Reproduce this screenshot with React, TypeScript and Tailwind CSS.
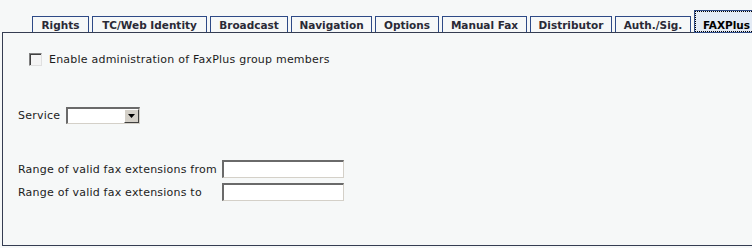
const tabs = [
  { label: 'Rights', w: 'w-[57px]' },
  { label: 'TC/Web Identity', w: 'w-[115px]' },
  { label: 'Broadcast', w: 'w-[78px]' },
  { label: 'Navigation', w: 'w-[81px]' },
  { label: 'Options', w: 'w-[64px]' },
  { label: 'Manual Fax', w: 'w-[85px]' },
  { label: 'Distributor', w: 'w-[82px]' },
  { label: 'Auth./Sig.', w: 'w-[76px]' },
]

function Field({ className }: { className?: string }) {
  return (
    <div className={`border-t-2 border-l-2 border-t-[#6a6a6a] border-l-[#6a6a6a] border-b border-r border-b-[#d4d0c8] border-r-[#d4d0c8] bg-white ${className ?? ''}`} />
  )
}

export default function App() {
  return (
    <div className="w-[752px] h-[248px] overflow-hidden bg-[#f6f8f8] text-[#1c1c1c] font-['DejaVu_Sans',sans-serif] text-[11px] leading-none">

      {/* Tabs */}
      <div className="flex items-end h-[32px] pl-[32px] gap-[3px] text-[10.5px]">
        {tabs.map((t) => (
          <div
            key={t.label}
            className={`${t.w} h-[16px] pt-[2px] shrink-0 flex items-center justify-center border border-b-0 border-[#2e4a86] font-bold text-[#2a2a36]`}
          >
            {t.label}
          </div>
        ))}
        <div className="relative w-[65px] h-[23px] -mb-[1px] z-10 shrink-0 border border-[#2e4a86] bg-[#e4ebf5]">
          <div className="absolute inset-0 pt-[7px] border border-dotted border-black flex items-center justify-center font-bold text-black">
            FAXPlus
          </div>
        </div>
      </div>

      {/* Panel */}
      <div className="ml-[2px] w-[800px] h-[214px] border border-[#353d52] tracking-[0.22px]">
        <div className="flex items-center pl-[26px] pt-[20px] gap-[7px]">
          <div className="w-[13px] h-[13px] border border-t-[#808080] border-l-[#808080] border-b-[#e0e0e0] border-r-[#e0e0e0] bg-[#f4f4f4] shadow-[inset_1px_1px_0_#404040]" />
          <span>Enable administration of FaxPlus group members</span>
        </div>

        <div className="flex items-center pl-[15px] mt-[41px]">
          <span className="w-[48px]">Service</span>
          <div className="flex w-[74px] h-[17px] border-t-2 border-l-2 border-t-[#6a6a6a] border-l-[#6a6a6a] border-b border-r border-b-[#d4d0c8] border-r-[#d4d0c8] bg-white">
            <div className="flex-1" />
            <div className="w-[15px] h-full bg-[#d4d0c8] border border-t-white border-l-white border-b-[#404040] border-r-[#404040] flex items-center justify-center">
              <svg width="7" height="4" viewBox="0 0 7 4"><path d="M0 0h7L3.5 4z" fill="#000" /></svg>
            </div>
          </div>
        </div>

        <div className="flex flex-col pl-[15px] mt-[36px] gap-[5px]">
          <div className="flex items-center">
            <span className="w-[204px]">Range of valid fax extensions from</span>
            <Field className="w-[122px] h-[18px]" />
          </div>
          <div className="flex items-center">
            <span className="w-[204px]">Range of valid fax extensions to</span>
            <Field className="w-[122px] h-[18px]" />
          </div>
        </div>
      </div>
    </div>
  )
}
